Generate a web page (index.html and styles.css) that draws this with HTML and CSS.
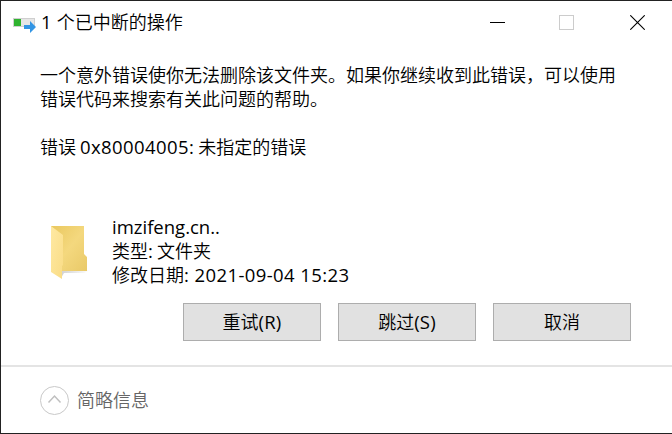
FILE: index.html
```html
<!DOCTYPE html>
<html lang="zh-CN">
<head>
<meta charset="utf-8">
<title>1 个已中断的操作</title>
<link rel="stylesheet" href="styles.css">
</head>
<body>
<div class="dialog">
  <header class="titlebar">
    <svg class="app-icon" width="24" height="22" viewBox="0 0 24 22">
      <rect x=".5" y="7.5" width="21" height="8" fill="#e6e6e6" stroke="#cfcfcf"/>
      <rect x="1" y="8" width="7" height="7" fill="#30b330"/>
      <path d="M11 14h6v-4l6 6-6 6v-4h-6z" fill="#3395e4"/>
    </svg>
    <h1 class="title"><span class="latin count">1</span> 个已中断的操作</h1>
    <div class="controls">
      <svg width="15" height="15" viewBox="0 0 15 15"><path d="M0 7.5h15" stroke="#000"/></svg>
      <svg width="15" height="15" viewBox="0 0 15 15"><rect x=".5" y=".5" width="14" height="14" fill="none" stroke="#ccc"/></svg>
      <svg class="close" width="15" height="15" viewBox="0 0 15 15"><path d="M.3.3l14.4 14.4M14.7.3L.3 14.7" stroke="#000" stroke-width="1.1"/></svg>
    </div>
  </header>
  <main class="content">
    <p class="message">一个意外错误使你无法删除该文件夹。如果你继续收到此错误，可以使用<br>错误代码来搜索有关此问题的帮助。</p>
    <p class="error">错误 <span class="latin code">0x80004005:</span> 未指定的错误</p>
    <section class="item">
      <svg class="folder" width="40" height="56" viewBox="0 0 40 56">
        <defs>
          <linearGradient id="back" x1="0" y1="0" x2="1" y2="1"><stop offset="0" stop-color="#eac85f"/><stop offset=".5" stop-color="#f4d87e"/><stop offset="1" stop-color="#e9c968"/></linearGradient>
          <linearGradient id="front" x1="0" y1="0" x2="1" y2="1"><stop offset="0" stop-color="#ffe9a2"/><stop offset="1" stop-color="#f9dc86"/></linearGradient>
          <linearGradient id="shade"><stop offset="0" stop-color="#777" stop-opacity=".35"/><stop offset="1" stop-color="#777" stop-opacity="0"/></linearGradient>
        </defs>
        <path d="M10 44h30l-6 3H14l-3 5z" fill="url(#shade)"/>
        <path d="M1 0h33v28l3 3v14H12L1 30z" fill="url(#back)"/>
        <path d="M1 0l12 9v30l-1 1v13L1 46z" fill="url(#front)"/>
      </svg>
      <div class="details">
        <div><span class="latin name">imzifeng.cn..</span></div>
        <div>类型<span class="latin">:</span> 文件夹</div>
        <div>修改日期<span class="latin date">: 2021-09-04 15:23</span></div>
      </div>
    </section>
    <div class="actions">
      <button class="button">重试<span class="latin">(R)</span></button>
      <button class="button">跳过<span class="latin">(S)</span></button>
      <button class="button">取消</button>
    </div>
  </main>
  <footer class="footer">
    <svg width="29" height="29" viewBox="0 0 29 29" fill="none"><circle cx="14.5" cy="14.5" r="14" stroke="#c8c8c8"/><path d="M8.5 16.5l6-6.5 6 6.5" stroke="#bfbfbf" stroke-width="1.5"/></svg>
    <span class="toggle-label">简略信息</span>
  </footer>
</div>
</body>
</html>
```
FILE: styles.css
```css
* { box-sizing: border-box; }
body {
  margin: 0;
  background: #fff;
  color: #000;
  font: 350 18px/24px "Noto Sans CJK SC", sans-serif;
}
h1, p { margin: 0; font: inherit; }
svg { display: block; flex: none; }
.dialog {
  display: flex;
  flex-direction: column;
  height: 434px;
  border: 1px solid #222;
  border-right: 0;
  white-space: nowrap;
}
.latin {
  font-family: "Open Sans", sans-serif;
  font-size: 18.5px;
  font-weight: 400;
  line-height: 1;
  letter-spacing: 0.2px;
}
.count { margin-right: 1px; }
.code { letter-spacing: 0.4px; }
.name { letter-spacing: 0; }
.date { letter-spacing: 0.4px; }
.titlebar {
  display: flex;
  align-items: center;
  height: 42px;
  padding: 0 27px 0 12px;
}
.title {
  margin-left: 4px;
  padding-bottom: 2px;
}
.controls {
  display: flex;
  gap: 54px;
  margin: 1px 0 0 auto;
}
.close { margin-left: 2px; }
.content {
  display: flex;
  flex-direction: column;
  height: 322px;
  padding: 19px 41px 0 39px;
}
.error { margin-top: 24px; }
.item {
  display: flex;
  margin-top: 56px;
  padding-left: 10px;
}
.folder { margin-top: 12px; }
.details { margin-left: 22px; }
.actions {
  display: flex;
  justify-content: flex-end;
  gap: 17px;
  margin-top: 16px;
}
.item { height: 73px; }
.button {
  width: 138px;
  height: 38px;
  padding: 0 0 2px;
  border: 1px solid #adadad;
  background: #e1e1e1;
  color: inherit;
  font: inherit;
}
.footer {
  display: flex;
  align-items: center;
  gap: 8px;
  height: 68px;
  padding-left: 39px;
  border-top: 2px solid #e4e4e4;
  color: #666;
}
.toggle-label { padding-bottom: 2px; }
```
